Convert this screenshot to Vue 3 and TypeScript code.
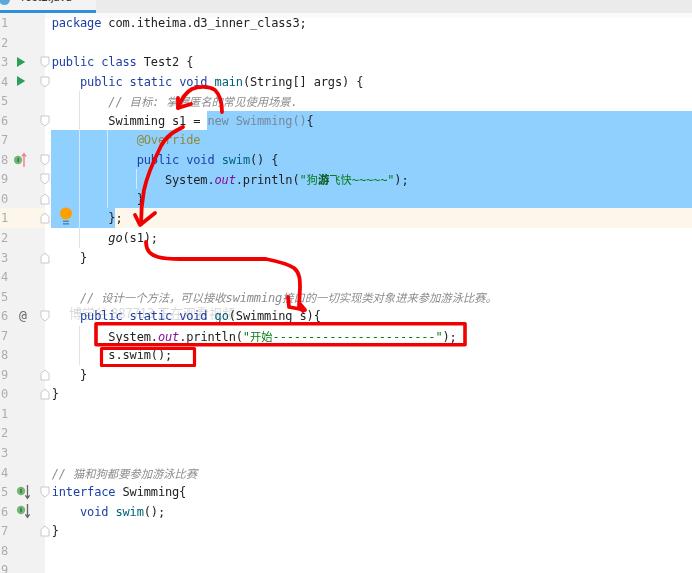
<script setup lang="ts">
type Seg = [string, string]
interface Line {
  pre?: Seg[]
  sel?: Seg[]
  post?: Seg[]
  icon?: 'run' | 'up' | 'down' | 'at'
  fold?: 'd' | 'u'
  guides?: number[]
  caret?: boolean
  bulb?: boolean
}

const k = (t: string): Seg => ['kw', t]
const p = (t: string): Seg => ['', t]
const c = (t: string): Seg => ['cm', t]
const m = (t: string): Seg => ['fn', t]
const s = (t: string): Seg => ['st', t]
const o = (t: string): Seg => ['out', t]

const lines: Line[] = [
  { pre: [k('package'), p(' com.itheima.d3_inner_class3;')] },
  {},
  { icon: 'run', fold: 'd', pre: [k('public class'), p(' Test2 {')] },
  { icon: 'run', fold: 'd', pre: [p('    '), k('public static void'), p(' '), m('main'), p('(String[] args) {')] },
  { guides: [28], pre: [p('        '), c('// 目标: 掌握匿名的常见使用场景.')] },
  { fold: 'd', guides: [28], pre: [p('        Swimming s1 = ')], sel: [['dim', 'new Swimming()'], p('{')] },
  { guides: [28, 56], sel: [p('            '), ['an', '@Override']] },
  { icon: 'up', fold: 'd', guides: [28, 56], sel: [p('            '), k('public void'), p(' '), m('swim'), p('() {')] },
  {
    fold: 'd',
    guides: [28, 56, 85],
    sel: [p('                System.'), o('out'), p('.println('), s('"狗'), ['st blob', '游'], s('飞快~~~~~"'), p(');')],
  },
  { fold: 'u', guides: [28, 56], sel: [p('            }')] },
  { fold: 'u', guides: [28], caret: true, bulb: true, sel: [p('        }')], post: [p(';')] },
  { guides: [28], pre: [p('        '), ['it', 'go'], p('(s1);')] },
  { fold: 'u', pre: [p('    }')] },
  {},
  { pre: [p('    '), c('// 设计一个方法，可以接收swimming接口的一切实现类对象进来参加游泳比赛。')] },
  { icon: 'at', fold: 'd', pre: [p('    '), k('public static void'), p(' '), m('go'), p('(Swimming s){')] },
  { guides: [28], pre: [p('        System.'), o('out'), p('.println('), s('"开始-----------------------"'), p(');')] },
  { guides: [28], pre: [p('        s.swim();')] },
  { fold: 'u', pre: [p('    }')] },
  { fold: 'u', pre: [p('}')] },
  {},
  {},
  {},
  { pre: [c('// 猫和狗都要参加游泳比赛')] },
  { icon: 'down', fold: 'd', pre: [k('interface'), p(' Swimming{')] },
  { icon: 'down', pre: [p('    '), k('void'), p(' '), m('swim'), p('();')] },
  { fold: 'u', pre: [p('}')] },
  {},
  {},
]

const pieces = (t: string): string[] => t.split(/([\u4e00-\u9fff，。]+)/)
const isCjk = (t: string): boolean => /[\u4e00-\u9fff，。]/.test(t)
</script>

<template>
  <div class="page">
    <header class="tabs">
      <div class="tab">
        <span class="file-dot"></span>
        <span class="tab-name">Test2.java</span>
        <span class="tab-x">×</span>
      </div>
    </header>

    <main class="editor">
      <div v-for="(line, i) in lines" :key="i" class="row">
        <div class="gutter" :class="{ caret: line.caret }">
          <span class="num">{{ (i + 1) % 10 }}</span>
          <span class="mark">
            <svg v-if="line.icon === 'run'" width="18" height="14" viewBox="0 0 18 14">
              <path d="M3 2 L11.2 7 L3 12 Z" fill="#2e9e5b" />
            </svg>
            <svg v-else-if="line.icon === 'up'" width="18" height="16" viewBox="0 0 18 16">
              <circle cx="4" cy="8" r="4.2" fill="#74b879" />
              <rect x="3.4" y="5.8" width="1.4" height="4.4" fill="#3d6b42" />
              <path d="M10 15 V2 M8 4.4 L10 1.6 L12 4.4" fill="none" stroke="#f0808a" stroke-width="1.4" />
            </svg>
            <svg v-else-if="line.icon === 'down'" width="18" height="16" viewBox="0 0 18 16">
              <circle cx="7" cy="7" r="4.2" fill="#74b879" />
              <rect x="6.3" y="4.8" width="1.4" height="4.4" fill="#3d6b42" />
              <path d="M13.5 1 V14 M11.4 11.4 L13.5 14.4 L15.6 11.4" fill="none" stroke="#666" stroke-width="1.3" />
            </svg>
            <span v-else-if="line.icon === 'at'" class="at">@</span>
          </span>
        </div>

        <svg v-if="line.fold === 'd'" class="fold" width="10" height="12" viewBox="0 0 10 12">
          <path d="M1 1 H9 V7.5 L5 11 L1 7.5 Z" fill="#fff" stroke="#c8c8c8" />
        </svg>
        <svg v-if="line.fold === 'u'" class="fold" width="10" height="12" viewBox="0 0 10 12">
          <path d="M1 11 H9 V4.5 L5 1 L1 4.5 Z" fill="#fff" stroke="#c8c8c8" />
        </svg>

        <div class="code" :class="{ 'caret-line': line.caret }">
          <i
            v-for="(g, gi) in line.guides ?? []"
            :key="gi"
            class="guide"
            :class="{ 'guide-on': line.sel && !line.pre }"
            :style="{ left: g + 'px' }"
          ></i>
          <span v-if="line.pre" class="part">
            <span v-for="(seg, si) in line.pre" :key="si" :class="seg[0]">
              <template v-for="(t, ti) in pieces(seg[1])" :key="ti">
                <span v-if="isCjk(t)" class="cjk">{{ t }}</span>
                <template v-else>{{ t }}</template>
              </template>
            </span>
          </span>
          <span v-if="line.sel" class="part sel" :class="{ grow: !line.post }">
            <span v-for="(seg, si) in line.sel" :key="si" :class="seg[0]">
              <template v-for="(t, ti) in pieces(seg[1])" :key="ti">
                <span v-if="isCjk(t)" class="cjk">{{ t }}</span>
                <template v-else>{{ t }}</template>
              </template>
            </span>
          </span>
          <span v-if="line.post" class="part">
            <span v-for="(seg, si) in line.post" :key="si" :class="seg[0]">{{ seg[1] }}</span>
          </span>
          <svg v-if="line.bulb" class="bulb" width="14" height="20" viewBox="0 0 14 20">
            <circle cx="7" cy="6.5" r="6" fill="#ffa000" />
            <rect x="4" y="13.6" width="6" height="1.3" fill="#4f7fa8" />
            <rect x="4" y="16.2" width="6" height="1.3" fill="#4f7fa8" />
          </svg>
        </div>
      </div>
    </main>

    <div class="watermark">博学谷 887713 正在观看视频</div>

    <svg class="ink" width="692" height="573" viewBox="0 0 692 573" fill="none" stroke="#f00000" stroke-linecap="round" stroke-linejoin="round">
      <g stroke-width="3.8">
        <path d="M222 112 C222 104 221 96 215 90 C209 86 199 86 192 89 C186 92 181 100 178 108" />
        <path d="M178 98 L178 108 L191 104" />
        <path d="M183 127 C175 131 167 135 161 146 C155 158 147 176 144 190 C142 201 141 212 141 224" />
        <path d="M135 215 L140 225 L155 213" />
        <path d="M146 242 C146 250 150 255 158 257 C165 259 172 259 180 259 L266 259 C276 261 288 264 294 268 C300 273 300 280 300 288 L299 307 L303 311" />
        <path d="M288 297 L289 307 L305 310 L300 304" />
      </g>
      <rect x="96" y="323.8" width="369" height="21" stroke-width="3.6" />
      <rect x="101.5" y="348.5" width="93" height="17" stroke-width="3.2" />
    </svg>
  </div>
</template>

<style scoped>
.page {
  position: relative;
  width: 692px;
  height: 573px;
  overflow: hidden;
  background: #fff;
  font-family: "DejaVu Sans Mono", "Noto Sans CJK SC", monospace;
  font-size: 12px;
  letter-spacing: -0.145px;
  color: #222;
}
.tabs {
  height: 13px;
  background: #ebebeb;
  overflow: hidden;
}
.tab {
  position: relative;
  width: 96px;
  height: 12.5px;
  box-sizing: border-box;
  padding-left: 19px;
  display: flex;
  align-items: flex-end;
  gap: 8px;
  border-bottom: 3.5px solid #2f8fd8;
  padding-bottom: 6px;
  background: #f3f3f3;
  font-family: "Inter", "Liberation Sans", sans-serif;
  font-size: 11px;
  letter-spacing: 0;
  color: #333;
}
.tab-name {
  line-height: 14px;
  white-space: nowrap;
}
.tab-x {
  line-height: 14px;
  color: #bbb;
}
.file-dot {
  position: absolute;
  left: -1px;
  top: -6px;
  width: 11px;
  height: 11px;
  border-radius: 50%;
  background: #5aa9de;
}
.editor {
  background: linear-gradient(#fafafa 5px, #fff 5px);
  filter: blur(0.3px);
}
.row {
  position: relative;
  display: flex;
  height: 19.55px;
}
.gutter {
  display: flex;
  flex: none;
  width: 45px;
  margin-right: 6px;
  background: #f2f2f2;
  line-height: 21.2px;
}
.gutter.caret {
  background: #fcf7ea;
}
.num {
  width: 14px;
  padding-left: 1px;
  box-sizing: border-box;
  color: #adadad;
}
.mark {
  display: flex;
  align-items: center;
  width: 18px;
}
.at {
  font-size: 13px;
  letter-spacing: 0;
  color: #666;
  padding-left: 5px;
}
.fold {
  position: absolute;
  left: 40px;
  top: 4px;
}
.code {
  position: relative;
  flex: 1;
  display: flex;
  min-width: 0;
  line-height: 21.2px;
}
.caret-line {
  background: #fcf7ea;
}
.part {
  position: relative;
  white-space: pre;
}
.part:first-of-type {
  padding-left: 0.7px;
}
.sel {
  background: #90d0ff;
}
.grow {
  flex: 1;
}
.guide {
  position: absolute;
  top: 0;
  bottom: 0;
  width: 1px;
  background: #e2e2e2;
  z-index: 1;
}
.guide-on {
  background: #d2eafb;
}
.kw {
  color: #1d3fa5;
}
.fn {
  color: #00627a;
}
.st {
  color: #067d17;
}
.blob {
  font-weight: 900;
  color: #0b5f26;
}
.cm {
  color: #8c8c8c;
  font-style: italic;
}
.out {
  color: #871094;
  font-style: italic;
}
.it {
  font-style: italic;
}
.an {
  color: #8f8a3a;
}
.dim {
  color: #75899a;
}
.cjk {
  font-family: "Noto Sans CJK SC", sans-serif;
  font-size: 11.3px;
  letter-spacing: 0;
}
.bulb {
  position: absolute;
  left: 8px;
  top: -1.5px;
  z-index: 2;
}
.watermark {
  position: absolute;
  left: 69px;
  top: 304px;
  font-family: "Noto Sans CJK SC", sans-serif;
  font-size: 13px;
  letter-spacing: 0;
  line-height: 18px;
  color: rgba(0, 0, 0, 0.18);
  white-space: nowrap;
}
.ink {
  position: absolute;
  left: 0;
  top: 0;
}
</style>
